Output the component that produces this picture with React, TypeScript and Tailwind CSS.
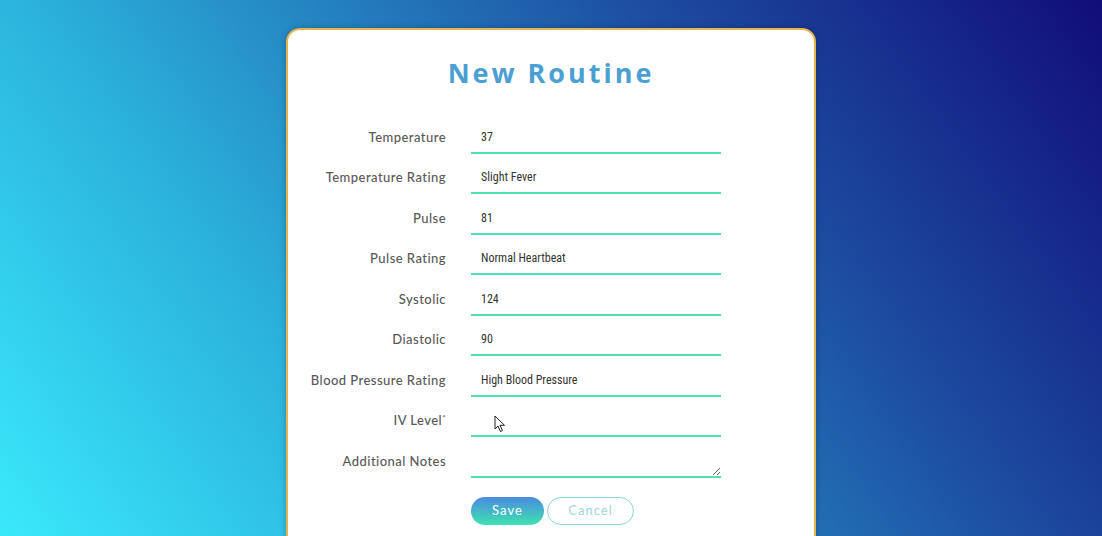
import React from 'react'

const fields: { label: string; value: string; required?: boolean }[] = [
  { label: 'Temperature', value: '37' },
  { label: 'Temperature Rating', value: 'Slight Fever' },
  { label: 'Pulse', value: '81' },
  { label: 'Pulse Rating', value: 'Normal Heartbeat' },
  { label: 'Systolic', value: '124' },
  { label: 'Diastolic', value: '90' },
  { label: 'Blood Pressure Rating', value: 'High Blood Pressure' },
  { label: 'IV Level', value: '', required: true }
]

function Cursor() {
  return (
    <svg
      width="12"
      height="18"
      viewBox="0 0 12 18"
      className="pointer-events-none absolute left-[494px] top-[415px]"
    >
      <path
        d="M1 1 L1 14 L4 11 L6.5 16.5 L8.5 15.6 L6 10.3 L10.5 10.3 Z"
        fill="#fff"
        stroke="#222"
        strokeWidth="1"
        strokeLinejoin="round"
      />
    </svg>
  )
}

export default function App() {
  return (
    <div className="relative h-screen w-full overflow-hidden bg-[linear-gradient(54deg,#3ae9fb_0%,#2bb2dc_28%,#1d4fa2_68%,#110d78_100%)]">
      <div className="absolute left-[286px] top-[28px] h-[560px] w-[530px] rounded-[14px] border-2 border-[#e5b450] bg-white shadow-[0_0_6px_rgba(0,0,0,0.25)]">
        <h1 className="pt-[23px] text-center font-['Open_Sans',sans-serif] text-[27px] font-bold tracking-[0.11em] text-[#4b9fd3]">
          New Routine
        </h1>

        <form className="mt-[28px] flex flex-col gap-[8.5px] pl-[8px]">
          {fields.map((f) => (
            <div key={f.label} className="flex items-center">
              <label className="w-[150px] text-right font-['Lato',sans-serif] text-[13px] font-medium tracking-[0.035em] text-[#595959]">
                {f.label}
                {f.required && <sup className="text-[8px]">*</sup>}
              </label>
              <input
                defaultValue={f.value}
                className="ml-[25px] h-[32px] w-[250px] border-b-2 border-[#4fe1b3] bg-transparent pl-[10px] font-['Liberation_Sans_Narrow','Roboto_Condensed',sans-serif] text-[12px] text-[#333] outline-none"
              />
            </div>
          ))}
          <div className="flex items-start">
            <label className="w-[150px] pt-[6px] text-right font-['Lato',sans-serif] text-[13px] font-medium tracking-[0.035em] text-[#595959]">
              Additional Notes
            </label>
            <textarea className="ml-[25px] block h-[32px] w-[250px] resize border-b-2 border-[#4fe1b3] bg-transparent pl-[10px] text-[12px] outline-none" />
          </div>
          <div className="mt-[11px] flex gap-[3px] pl-[175px]">
            <button
              type="button"
              className="h-[28px] w-[73px] rounded-full bg-[linear-gradient(180deg,#4a8ae0,#3ee3b0)] font-['Lato',sans-serif] text-[13px] tracking-[0.08em] text-white"
            >
              Save
            </button>
            <button
              type="button"
              className="h-[28px] w-[87px] rounded-full border border-[#86d6d9] bg-white font-['Lato',sans-serif] text-[13px] tracking-[0.08em] text-[#9fd6da]"
            >
              Cancel
            </button>
          </div>
        </form>
      </div>
      <Cursor />
    </div>
  )
}
